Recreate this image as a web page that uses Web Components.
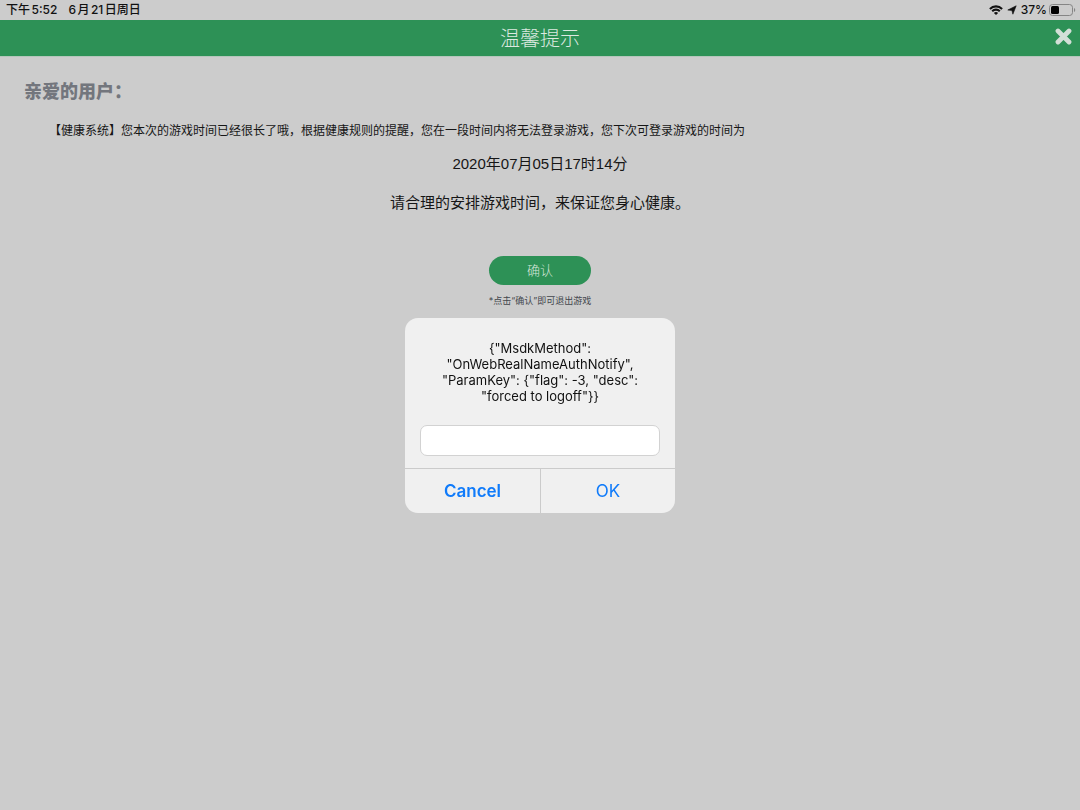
<!DOCTYPE html>
<html lang="zh-CN">
<head>
<meta charset="utf-8">
<meta name="viewport" content="width=device-width, initial-scale=1">
<title>温馨提示</title>
<style>
    :root {
        --page: #cccccc;
        --green: #2d9156;
        --ink: #161616;
        --blue: #107bfa;
        --latin: Inter, "Noto Sans CJK SC", sans-serif;
        --cjk: "Liberation Sans", "Noto Sans CJK SC", sans-serif;
    }
    body {
        margin: 0;
        min-height: 100vh;
        background: var(--page);
        color: var(--ink);
        font-family: var(--cjk);
    }
</style>
</head>
<body>
<status-bar time="下午5:52" date="6月21日周日" battery="37%"></status-bar>
<title-bar>温馨提示</title-bar>
<health-notice>
    <span slot="greeting">亲爱的用户：</span>
    <span slot="message">【健康系统】您本次的游戏时间已经很长了哦，根据健康规则的提醒，您在一段时间内将无法登录游戏，您下次可登录游戏的时间为</span>
    <span slot="date">2020年07月05日17时14分</span>
    <span slot="advice">请合理的安排游戏时间，来保证您身心健康。</span>
    <span slot="confirm">确认</span>
    <span slot="hint">*点击“确认”即可退出游戏</span>
</health-notice>
<prompt-dialog cancel="Cancel" ok="OK">{"MsdkMethod": "OnWebRealNameAuthNotify", "ParamKey": {"flag": -3, "desc": "forced to logoff"}}</prompt-dialog>

<script>
class StatusBar extends HTMLElement {
    constructor() {
        super()
        this.attachShadow({ mode: 'open' })
    }
    connectedCallback() {
        this.shadowRoot.innerHTML = `
            <style>
                :host {
                    display: flex;
                    justify-content: space-between;
                    align-items: center;
                    height: 20px;
                    padding: 0 4px 0 6px;
                    font: 500 12px/20px var(--latin);
                    color: #111;
                }
                .group {
                    display: flex;
                    align-items: center;
                }
                .when {
                    gap: 11px;
                    text-autospace: normal;
                }
                .state {
                    gap: 4px;
                }
                svg {
                    display: block;
                }
                .charge {
                    display: flex;
                    align-items: center;
                    gap: 2px;
                }
            </style>
            <div class="group when">
                <span>${this.getAttribute('time')}</span>
                <span>${this.getAttribute('date')}</span>
            </div>
            <div class="group state">
                <svg width="14" height="10" viewBox="0 0 14 10" aria-hidden="true">
                    <g fill="none" stroke="#111" stroke-width="2.1">
                        <path d="M0.9 3.9C4.3 0.5 9.7 0.5 13.1 3.9"/>
                        <path d="M3.2 6.2C5.3 4.1 8.7 4.1 10.8 6.2"/>
                    </g>
                    <path fill="#111" d="M7 10L4.9 7.9C6.1 6.8 7.9 6.8 9.1 7.9Z"/>
                </svg>
                <svg width="10" height="10" viewBox="0 0 10 10" aria-hidden="true">
                    <path fill="#111" stroke="#111" stroke-width="0.6" stroke-linejoin="round" d="M9.2 0.8L5.9 9.2L4.9 5.5L0.8 5Z"/>
                </svg>
                <span class="charge">
                    <span>${this.getAttribute('battery')}</span>
                    <svg width="27" height="12" viewBox="0 0 27 12" aria-hidden="true">
                        <rect x="0.5" y="0.5" width="23" height="11" rx="3" fill="none" stroke="#858585"/>
                        <rect x="2" y="2" width="8" height="8" rx="1.5" fill="#000"/>
                        <path d="M25 4C26.7 4.7 26.7 7.3 25 8Z" fill="#858585"/>
                    </svg>
                </span>
            </div>
        `
    }
}

class TitleBar extends HTMLElement {
    constructor() {
        super()
        this.attachShadow({ mode: 'open' })
        this.shadowRoot.innerHTML = `
            <style>
                :host {
                    display: grid;
                    grid-template-columns: 1fr auto 1fr;
                    align-items: start;
                    height: 36px;
                    background: var(--green);
                    border-bottom: 1px solid #b4c6bb;
                }
                h1 {
                    grid-column: 2;
                    margin: 0;
                    font-size: 20px;
                    font-weight: 300;
                    line-height: 38px;
                    color: #dce9e0;
                }
                button {
                    justify-self: end;
                    padding: 8px;
                    border: 0;
                    background: none;
                }
                svg {
                    display: block;
                }
            </style>
            <h1><slot></slot></h1>
            <button type="button" aria-label="关闭">
                <svg width="17" height="17" viewBox="0 0 17 17">
                    <path d="M3 3L14 14M14 3L3 14" stroke="#d3dfd7" stroke-width="4.8" stroke-linecap="round"/>
                </svg>
            </button>
        `
    }
}

class HealthNotice extends HTMLElement {
    constructor() {
        super()
        this.attachShadow({ mode: 'open' })
        this.shadowRoot.innerHTML = `
            <style>
                :host {
                    display: block;
                    padding: 21px 24px;
                    text-align: center;
                }
                h2, p {
                    margin: 0;
                }
                h2 {
                    font-size: 18px;
                    font-weight: 900;
                    line-height: 28px;
                    text-align: left;
                    color: #73767d;
                }
                .message {
                    margin-top: 15px;
                    padding: 0 25px;
                    font-size: 12px;
                    line-height: 20px;
                    text-align: left;
                }
                .line {
                    margin-top: 15px;
                    font-size: 15px;
                    line-height: 24px;
                }
                .line.date {
                    margin-top: 11px;
                }
                button {
                    width: 102px;
                    height: 29px;
                    margin-top: 41px;
                    padding: 0;
                    border: 0;
                    border-radius: 15px;
                    background: var(--green);
                    color: #d6e6db;
                    font: 300 13px/28px var(--cjk);
                }
                .hint {
                    margin-top: 8px;
                    font-family: Inter, "Noto Sans CJK SC", sans-serif;
                    font-size: 9px;
                    line-height: 16px;
                    color: #43474d;
                }
            </style>
            <h2><slot name="greeting"></slot></h2>
            <p class="message"><slot name="message"></slot></p>
            <p class="line date"><slot name="date"></slot></p>
            <p class="line"><slot name="advice"></slot></p>
            <button type="button"><slot name="confirm"></slot></button>
            <p class="hint"><slot name="hint"></slot></p>
        `
    }
}

class PromptDialog extends HTMLElement {
    constructor() {
        super()
        this.attachShadow({ mode: 'open' })
    }
    connectedCallback() {
        this.shadowRoot.innerHTML = `
            <style>
                /* the layer covers the page and keeps the dialog centred below the status bar */
                :host {
                    position: fixed;
                    inset: 21px 0 0;
                    display: flex;
                    align-items: center;
                    justify-content: center;
                    font-family: var(--latin);
                    color: #111;
                }
                form {
                    box-sizing: border-box;
                    width: 270px;
                    border-radius: 13px;
                    background: #f0f0f0;
                    overflow: hidden;
                }
                .content {
                    padding: 22px 15px 12px;
                }
                label {
                    display: block;
                    padding: 0 16px;
                    font-size: 13px;
                    line-height: 16px;
                    text-align: center;
                }
                input {
                    display: block;
                    box-sizing: border-box;
                    width: 100%;
                    height: 31px;
                    margin-top: 21px;
                    padding: 0 8px;
                    border: 1px solid #d2d2d2;
                    border-radius: 7px;
                    background: #fff;
                    font: inherit;
                }
                .actions {
                    display: grid;
                    grid-template-columns: 1fr 1fr;
                    border-top: 1px solid #cbcbcb;
                }
                button {
                    height: 44px;
                    padding: 0;
                    border: 0;
                    background: none;
                    color: var(--blue);
                    font: 400 17px/44px var(--latin);
                }
                .cancel {
                    font-weight: 600;
                }
                .ok {
                    border-left: 1px solid #cbcbcb;
                }
            </style>
            <form role="dialog" aria-labelledby="text">
                <div class="content">
                    <label id="text" for="answer"><slot></slot></label>
                    <input id="answer" type="text">
                </div>
                <div class="actions">
                    <button class="cancel" type="button">${this.getAttribute('cancel')}</button>
                    <button class="ok" type="button">${this.getAttribute('ok')}</button>
                </div>
            </form>
        `
    }
}

customElements.define('status-bar', StatusBar)
customElements.define('title-bar', TitleBar)
customElements.define('health-notice', HealthNotice)
customElements.define('prompt-dialog', PromptDialog)
</script>
</body>
</html>
